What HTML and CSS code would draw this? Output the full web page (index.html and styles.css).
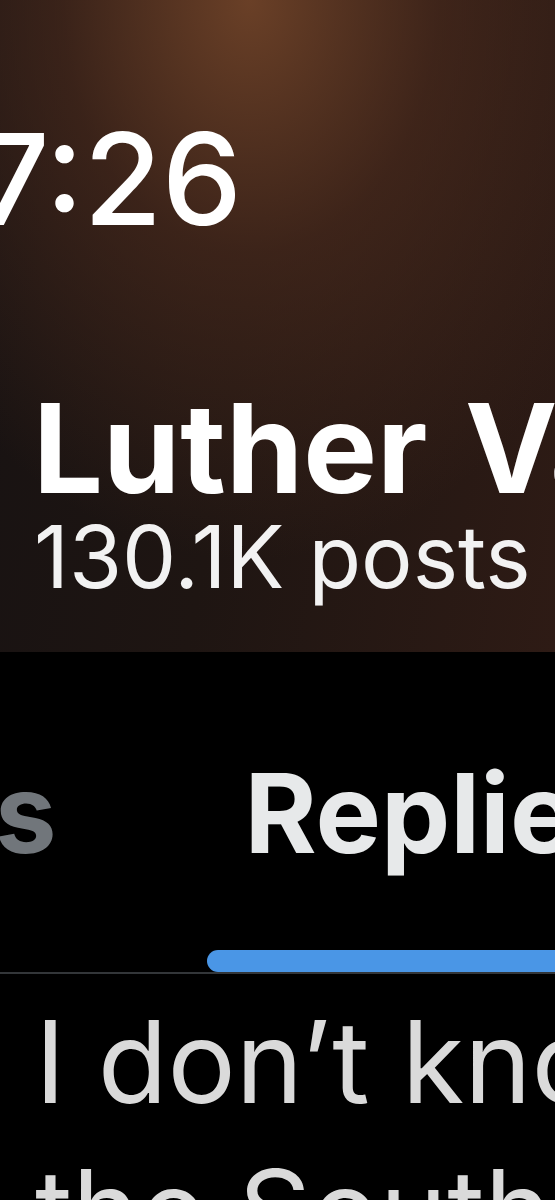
FILE: index.html
```html
<!DOCTYPE html>
<html lang="en">
<head>
    <meta charset="UTF-8">
    <meta name="viewport" content="width=device-width, initial-scale=1.0">
    <title>Luther Vandross</title>
    <link rel="stylesheet" href="styles.css">
</head>
<body>
    <div class="header">
        <div class="clock">7:26</div>
        <h1 class="name">Luther Vandross</h1>
        <div class="post-count">130.1K posts</div>
    </div>

    <div class="tabs">
        <div class="tab">
            <span class="tab-label">Posts</span>
        </div>
        <div class="tab active">
            <span class="tab-label">Replies</span>
            <span class="indicator"></span>
        </div>
    </div>

    <div class="post">
        <p class="post-text">I don’t know what it is about<br>the South and its people</p>
    </div>
</body>
</html>
```

FILE: styles.css
```css
body {
    margin: 0;
    width: 555px;
    height: 1200px;
    overflow: hidden;
    background-color: #000;
    font-family: Inter, 'Liberation Sans', sans-serif;
    color: #fff;
}

.header {
    height: 652px;
    box-sizing: border-box;
    padding-top: 116px;
    background:
        radial-gradient(ellipse 420px 560px at 250px 0, rgba(110, 66, 40, 0.95) 0%, rgba(80, 45, 30, 0.6) 45%, rgba(40, 25, 20, 0) 100%),
        linear-gradient(100deg, #171212 0%, #1e1512 45%, #2e1b15 100%);
    overflow: hidden;
    white-space: nowrap;
}

.clock {
    font-size: 127px;
    line-height: 1;
    font-weight: 500;
    margin-left: -23px;
}

.name {
    margin: 143px 0 0 33px;
    font-size: 124px;
    line-height: 1;
    font-weight: 700;
    word-spacing: 8px;
}

.post-count {
    margin: 4px 0 0 34px;
    font-size: 86px;
    line-height: 1;
    color: #f2f2f2;
}

.tabs {
    display: flex;
    gap: 112px;
    margin-top: 106px;
    margin-left: -282px;
    border-bottom: 2px solid #333639;
    white-space: nowrap;
}

.tab {
    display: flex;
    flex-direction: column;
    padding: 0 38px;
}

.tab-label {
    font-size: 110px;
    line-height: 1;
    font-weight: 700;
    color: #71767b;
}

.tab.active .tab-label {
    color: #e7e9ea;
}

.indicator {
    display: block;
    height: 22px;
    margin: 82px -38px 0;
    border-radius: 11px;
    background-color: #4a96e6;
}

.tab:not(.active) .tab-label {
    padding-bottom: 104px;
}

.post {
    padding: 13px 0 0 35px;
}

.post-text {
    margin: 0;
    font-size: 114px;
    line-height: 149px;
    color: #dadada;
    white-space: nowrap;
}
```
